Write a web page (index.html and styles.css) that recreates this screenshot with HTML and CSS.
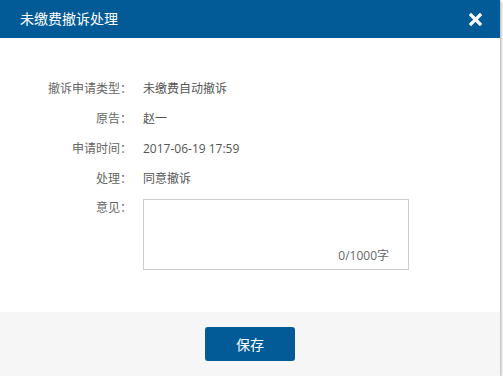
FILE: index.html
```html
<!DOCTYPE html>
<html lang="zh-CN">
<head>
<meta charset="utf-8">
<title>未缴费撤诉处理</title>
<link rel="stylesheet" href="styles.css">
</head>
<body>
<div class="dialog">
  <div class="dialog-header">
    <span class="dialog-title">未缴费撤诉处理</span>
    <span class="close" aria-label="关闭">
      <svg width="13" height="13" viewBox="0 0 13 13"><path d="M2 2 L11 11 M11 2 L2 11" stroke="#fff" stroke-width="3.2" stroke-linecap="square"/></svg>
    </span>
  </div>
  <div class="dialog-body">
    <div class="row"><span class="label">撤诉申请类型：</span><span class="value">未缴费自动撤诉</span></div>
    <div class="row"><span class="label">原告：</span><span class="value">赵一</span></div>
    <div class="row"><span class="label">申请时间：</span><span class="value">2017-06-19 17:59</span></div>
    <div class="row"><span class="label">处理：</span><span class="value">同意撤诉</span></div>
    <div class="row row-area"><span class="label">意见：</span>
      <div class="area-wrap">
        <textarea class="area"></textarea>
        <span class="counter">0/1000字</span>
      </div>
    </div>
  </div>
  <div class="dialog-footer">
    <button class="btn">保存</button>
  </div>
</div>
</body>
</html>
```
FILE: styles.css
```css
html, body {
  margin: 0;
  padding: 0;
  background: #fff;
}
body {
  font-family: "Open Sans", "Noto Sans CJK SC", sans-serif;
  color: #555;
}
.dialog {
  width: 500px;
  background: #fff;
  box-shadow: 1px 1px 3px rgba(0,0,0,0.35);
}
.dialog-header {
  height: 38px;
  background: #025b97;
  display: flex;
  align-items: center;
  justify-content: space-between;
  padding: 0 18px 0 20px;
}
.dialog-title {
  color: #fff;
  font-size: 14px;
  line-height: 18px;
}
.close {
  display: flex;
  width: 13px;
  height: 13px;
  margin-top: 1px;
}
.dialog-body {
  padding: 35px 0 42px;
}
.row {
  display: flex;
  height: 30px;
  align-items: center;
  font-size: 12px;
}
.label {
  width: 132px;
  text-align: right;
  color: #666;
  flex: none;
}
.value {
  margin-left: 11px;
  color: #555;
}
.row-area {
  height: auto;
  align-items: flex-start;
  margin-top: 6px;
}
.row-area .label {
  line-height: 18px;
}
.area-wrap {
  position: relative;
  margin-left: 11px;
  width: 266px;
  height: 71px;
}
.area {
  display: block;
  box-sizing: border-box;
  width: 100%;
  height: 100%;
  margin: 0;
  border: 1px solid #cccccc;
  resize: none;
  outline: none;
  font-family: inherit;
}
.counter {
  position: absolute;
  right: 20px;
  bottom: 6px;
  font-size: 12px;
  line-height: 16px;
  color: #666;
}
.dialog-footer {
  height: 64px;
  background: #f6f6f6;
  display: flex;
  align-items: center;
  justify-content: center;
}
.btn {
  width: 90px;
  height: 34px;
  border: none;
  border-radius: 3px;
  background: #025b97;
  color: #fff;
  font-size: 14px;
  font-family: inherit;
  padding: 0;
}
```
